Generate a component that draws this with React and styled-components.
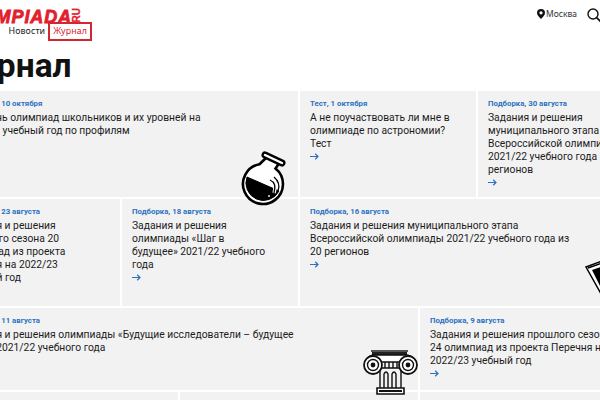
import React from "react";
import styled, { createGlobalStyle } from "styled-components";

const Global = createGlobalStyle`
  html, body { margin: 0; padding: 0; background: #fff; overflow: hidden; }
`;
const Viewport = styled.div`
  width: 600px; height: 400px; overflow: hidden; position: relative;
`;
const Page = styled.div`
  width: 700px; margin-left: -49px; display: flex; flex-direction: column;
  font-family: Roboto, sans-serif; color: #1c1c1c;
`;
const Header = styled.header`
  height: 41px; display: flex; justify-content: space-between; align-items: flex-start;
`;
const Brand = styled.div`display: flex; flex-direction: column; margin-left: -10px;`;
const Logo = styled.div`
  height: 22px; display: flex; align-items: flex-end; color: #e2202c;
  font: italic 900 18px/10px "Liberation Sans", sans-serif; -webkit-text-stroke: 0.8px #e2202c;
  letter-spacing: 0.9px; white-space: nowrap; justify-content: flex-end; width: 140px;
`;
const LogoRu = styled.span`
  font-size: 10px; line-height: 9px; writing-mode: vertical-rl; transform: rotate(180deg); font-style: normal;
  letter-spacing: 0; -webkit-text-stroke: 0.3px #e2202c;
`;
const Nav = styled.nav`display: flex; align-items: center; font: 8.8px/13px "Noto Sans", sans-serif; white-space: nowrap; letter-spacing: 0.1px;`;
const NavItem = styled.a`
  color: ${p => p.$active ? "#d42630" : "#222"};
  border: 2px solid ${p => p.$active ? "#d42630" : "transparent"}; padding: 1px 3px; line-height: 13px;
  margin-left: ${p => p.$active ? -2 : 0}px;
`;
const Tools = styled.div`
  display: flex; align-items: center; gap: 10px; margin: 6px 0 0 0; padding-right: 49px;
  font: 8.5px/14px "Noto Sans", sans-serif; color: #333;
`;
const Place = styled.span`display: flex; align-items: center; gap: 1px; margin-top: -2px;`;
const SearchWrap = styled.span`display: flex; margin-top: 2px;`;
const Title = styled.h1`
  margin: 0 0 0 -4px; height: 50px; font: 700 33.5px/50px Roboto, sans-serif; color: #111;
`;
const Grid = styled.div`
  display: grid; gap: 2px;
  grid-template-columns: 169px 56px 118px 118px 56px 1fr;
  grid-template-rows: 106px 107px 82px 40px;
`;
const Card = styled.article`
  position: relative; background: #f2f2f2; padding: 8px 10px 0; box-sizing: border-box; min-width: 0;
  grid-column: ${p => p.$col};
`;
const Meta = styled.div`
  font-size: 7.8px; line-height: 10px; font-weight: 700; color: #2b72c0; margin-bottom: 2px; white-space: nowrap;
`;
const Text = styled.div`
  font-size: 10.3px; line-height: 13px; color: #1c1c1c; white-space: nowrap;
`;
const ArrowIcon = styled.svg`display: block; margin: 3px 0 0 0;`;
const Pic = styled.svg`
  position: absolute; z-index: 2; overflow: visible;
  right: ${p => p.$right}px; bottom: ${p => p.$bottom}px;
`;

const Flask = () => (
  <Pic $right={8} $bottom={-11} width="50" height="60" viewBox="240 148 50 60" fill="none" stroke="#000" strokeWidth="2.6">
    <path d="M267 157 L259.5 164.3 A20 20 0 1 0 275.5 168.4 L280 162" fill="#fff" />
    <path d="M247 177 L279 191 A17.5 17.5 0 0 1 247 177Z" fill="#000" stroke="#000" strokeWidth="1" />
    <path d="M265 155 L282 163" stroke="#000" strokeWidth="7" strokeLinecap="round" />
    <path d="M265 155 L282 163" stroke="#fff" strokeWidth="2.4" strokeLinecap="round" />
    <path d="M270 180 Q277 183 274 193" stroke="#fff" strokeWidth="3.4" />
    <path d="M270 180 Q277 183 274 193 M274 177 Q281 183 278 191" stroke="#000" strokeWidth="1.3" />
    <circle cx="269" cy="196" r="0.9" fill="#fff" stroke="none" />
  </Pic>
);
const Column = () => (
  <Pic $right={-2} $bottom={-7} width="58" height="50" viewBox="362 347 58 50" fill="none" stroke="#111" strokeWidth="1.4">
    <rect x="371" y="350" width="37" height="2" fill="#555" stroke="none" />
    <rect x="372" y="352" width="35" height="3" fill="#222" stroke="none" />
    <path d="M366 362 Q367 356 373 355 H407 Q414 356 415 362" fill="#fff" strokeWidth="1.6" />
    <circle cx="373" cy="365" r="9" fill="#fff" strokeWidth="1.8" />
    <circle cx="373" cy="365" r="5.5" fill="#fff" />
    <circle cx="373" cy="365" r="2.4" fill="#111" stroke="none" />
    <circle cx="408" cy="365" r="9" fill="#fff" strokeWidth="1.8" />
    <circle cx="408" cy="365" r="5.5" fill="#fff" />
    <circle cx="408" cy="365" r="2.4" fill="#111" stroke="none" />
    <path d="M382 362 H399 M382 368 H399 M385 362 V368 M389 362 V368 M393 362 V368 M397 362 V368" />
    <path d="M380 370 V388 M401 370 V388 M384 388 V374 Q386 370 388 374 V388 M392 388 V374 Q394 370 396 374 V388" />
    <path d="M377 388 H404 V394 H377 Z" fill="#fff" strokeWidth="1.6" />
    <path d="M379 391 H402" strokeWidth="2" />
  </Pic>
);
const Book = () => (
  <Pic $right={41} $bottom={14} width="26" height="32" viewBox="584 260 26 32" fill="none" stroke="#000" strokeWidth="1.5">
    <path d="M586 267 L602 261 L610 270 L600 292 Z" fill="#fff" />
    <path d="M588 268 L602 263" />
    <path d="M592 270 L604 266 L608 272 L600 286 Z" fill="#000" stroke="none" />
  </Pic>
);

const PinIcon = () => (
  <svg width="8" height="10" viewBox="0 0 8 10"><path d="M4 0a4 4 0 0 1 4 4c0 2.4-2.6 4.6-4 6-1.4-1.4-4-3.6-4-6a4 4 0 0 1 4-4z" fill="#111"/><circle cx="4" cy="3.8" r="1.6" fill="#fff"/></svg>
);
const SearchIcon = () => (
  <svg width="15" height="15" viewBox="0 0 15 15" fill="none" stroke="#111" strokeWidth="1.4"><circle cx="6" cy="6" r="5"/><path d="M9.6 9.6 L14.5 14.5" strokeWidth="1.7"/></svg>
);
const Arrow = () => (
  <ArrowIcon width="9" height="7" viewBox="0 0 9 7" fill="none" stroke="#2b72c0" strokeWidth="1.2"><path d="M0 3.5 H8 M5.2 0.8 L8 3.5 L5.2 6.2"/></ArrowIcon>
);

const CardBody = ({ meta, lines, arrow = true }) => (
  <>
    <Meta>{meta}</Meta>
    <Text>{lines.map((l, i) => <div key={i}>{l}</div>)}</Text>
    {arrow && <Arrow />}
  </>
);

export default function App() {
  return (
    <Viewport>
      <Global />
      <Page>
        <Header>
          <Brand>
            <Logo>OLIMPIADA<LogoRu>RU</LogoRu></Logo>
            <Nav>
              <NavItem>Олимпиады</NavItem>
              <NavItem>Новости</NavItem>
              <NavItem $active>Журнал</NavItem>
            </Nav>
          </Brand>
          <Tools>
            <Place><PinIcon />Москва</Place>
            <SearchWrap><SearchIcon /></SearchWrap>
          </Tools>
        </Header>
        <Title>Журнал</Title>
        <Grid>
          <Card $col="1 / 4">
            <CardBody arrow={false} meta="Подборка, 10 октября" lines={["Перечень олимпиад школьников и их уровней на", "2021/22 учебный год по профилям"]} />
            <Flask />
          </Card>
          <Card $col="4 / 6">
            <CardBody meta="Тест, 1 октября" lines={["А не поучаствовать ли мне в", "олимпиаде по астрономии?", "Тест"]} />
          </Card>
          <Card $col="6 / 7">
            <CardBody meta="Подборка, 30 августа" lines={["Задания и решения", "муниципального этапа", "Всероссийской олимпиады", "2021/22 учебного года из 20", "регионов"]} />
          </Card>
          <Card $col="1 / 2">
            <CardBody arrow={false} meta="Подборка, 23 августа" lines={["Задания и решения", "прошлого сезона 20", "олимпиад из проекта", "Перечня на 2022/23", "учебный год"]} />
          </Card>
          <Card $col="2 / 4">
            <CardBody meta="Подборка, 18 августа" lines={["Задания и решения", "олимпиады «Шаг в", "будущее» 2021/22 учебного", "года"]} />
          </Card>
          <Card $col="4 / 7">
            <CardBody meta="Подборка, 16 августа" lines={["Задания и решения муниципального этапа", "Всероссийской олимпиады 2021/22 учебного года из", "20 регионов"]} />
            <Book />
          </Card>
          <Card $col="1 / 5">
            <CardBody arrow={false} meta="Подборка, 11 августа" lines={["Задания и решения олимпиады «Будущие исследователи – будущее", "науки» 2021/22 учебного года"]} />
            <Column />
          </Card>
          <Card $col="5 / 7">
            <CardBody meta="Подборка, 9 августа" lines={["Задания и решения прошлого сезона", "24 олимпиад из проекта Перечня на", "2022/23 учебный год"]} />
          </Card>
          <Card $col="1 / 3" />
          <Card $col="3 / 5" />
          <Card $col="5 / 7" />
        </Grid>
      </Page>
    </Viewport>
  );
}
